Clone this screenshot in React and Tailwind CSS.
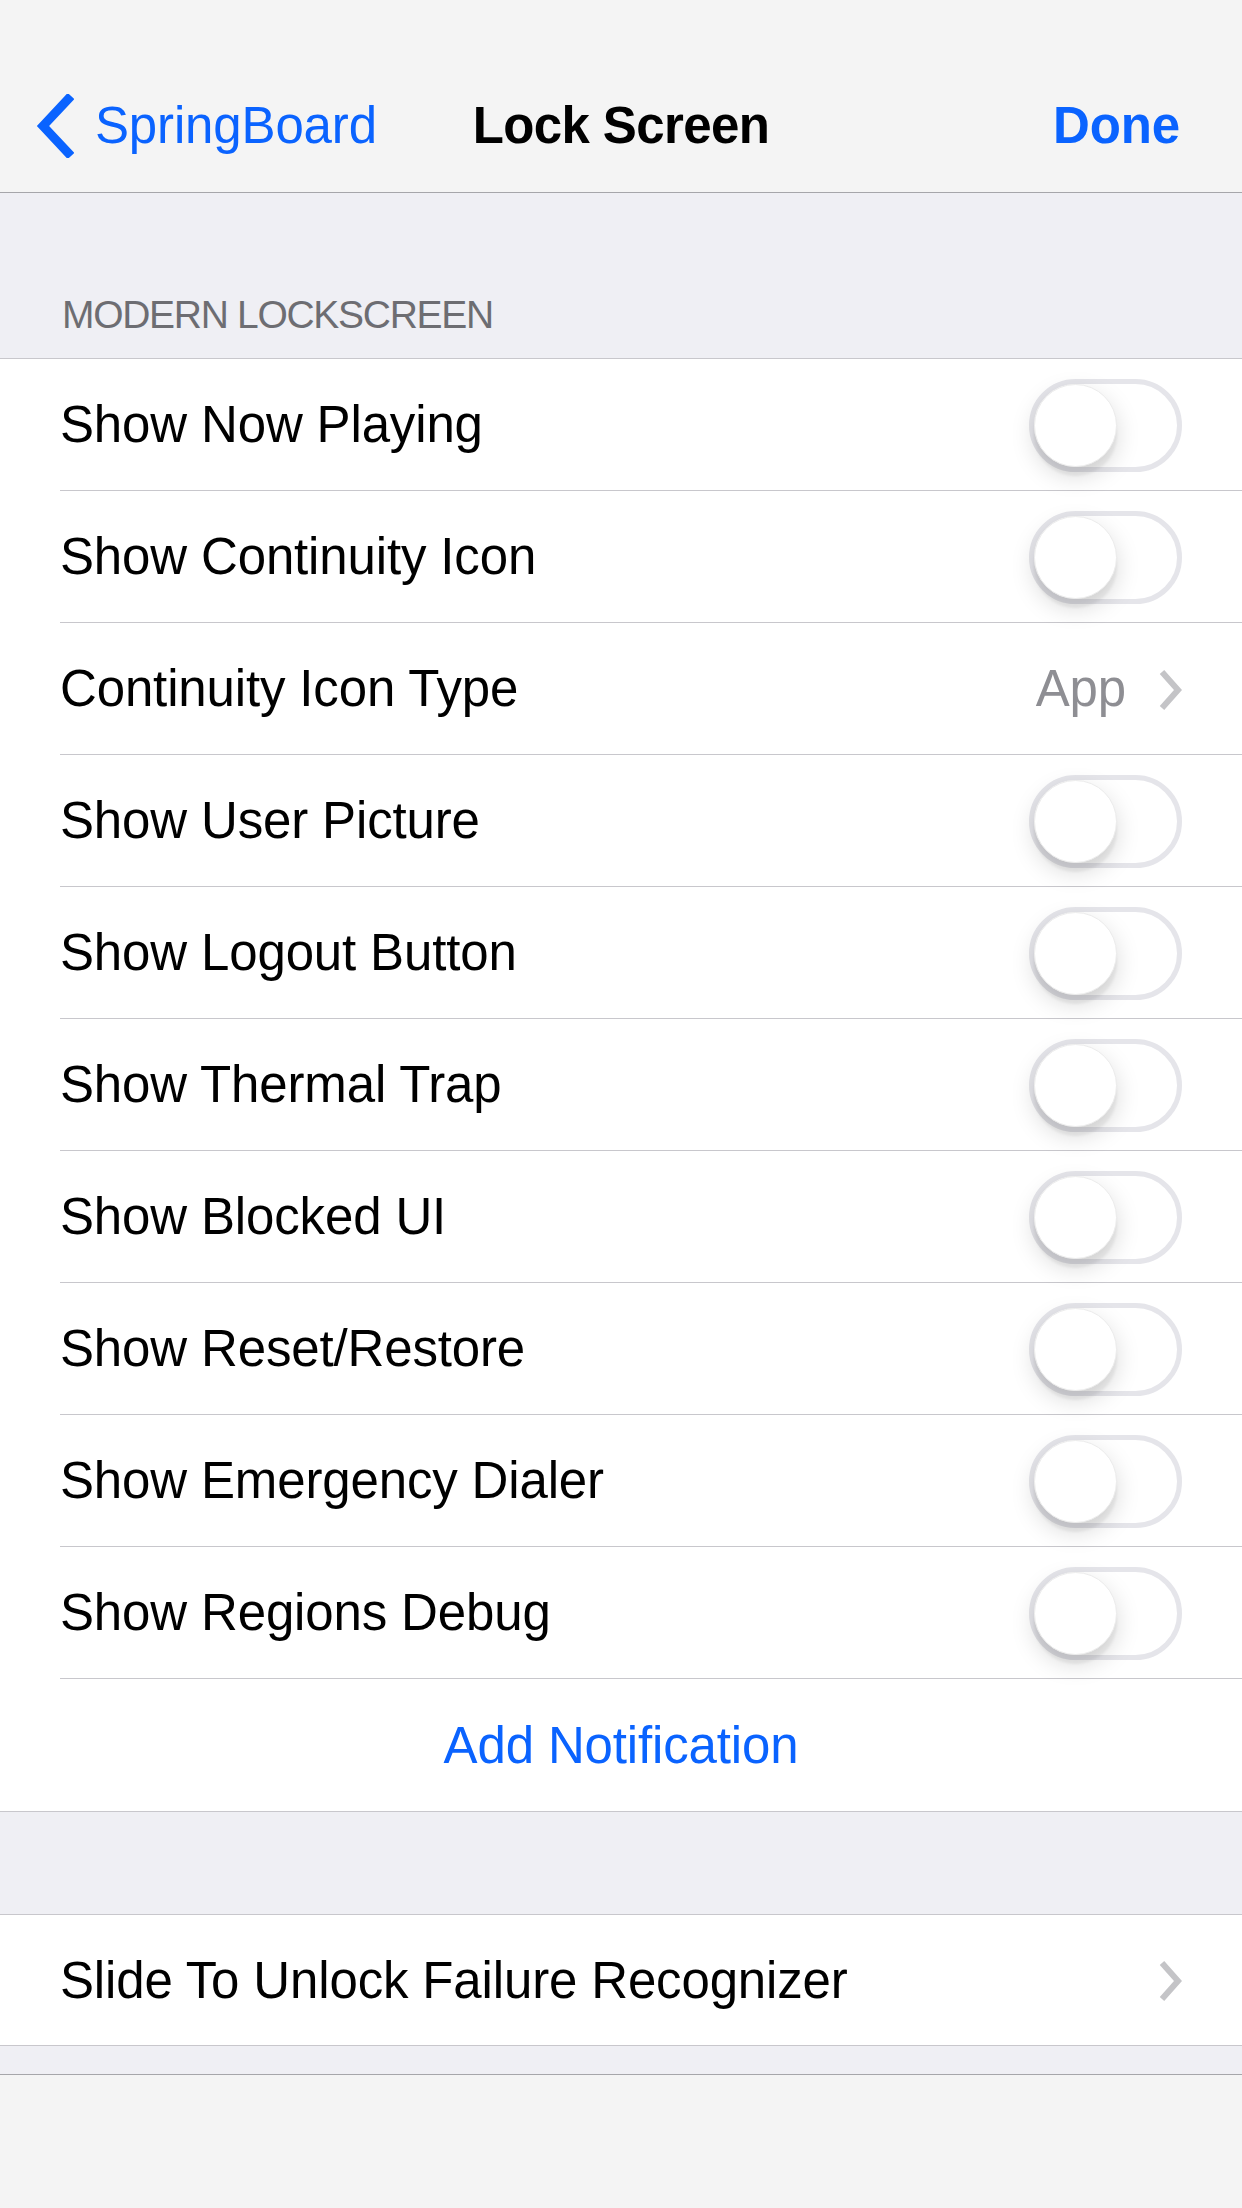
import React from 'react'

const toggles = [
  'Show Now Playing',
  'Show Continuity Icon',
  null,
  'Show User Picture',
  'Show Logout Button',
  'Show Thermal Trap',
  'Show Blocked UI',
  'Show Reset/Restore',
  'Show Emergency Dialer',
  'Show Regions Debug',
]

const Toggle = () => (
  <div className="w-[153px] h-[93px] rounded-full border-[5px] border-[#e5e5ea] bg-white flex items-center">
    <div className="w-[83px] h-[83px] rounded-full bg-white shadow-[0_9px_24px_rgba(0,0,0,0.15),0_9px_3px_rgba(0,0,0,0.06)] border border-[#ececec]" />
  </div>
)

const Chevron = () => (
  <svg width="24" height="42" viewBox="0 0 24 42" fill="none">
    <path d="M4 3 L20 21 L4 39" stroke="#c4c4c7" strokeWidth="6" />
  </svg>
)

const Row = ({ children }) => (
  <div className="h-[132px] pl-[60px] flex bg-white">
    <div className="flex-1 flex items-center pr-[60px] pt-[2px] border-b border-[#c8c7cc]">
      {children}
    </div>
  </div>
)

const App = () => {
  return (
    <div
      className="w-[1242px] h-[2208px] bg-[#efeff4] flex flex-col text-black tracking-[-0.15px]"
      style={{ fontFamily: '"Liberation Sans", Arial, sans-serif' }}
    >
      {/* Nav bar */}
      <div className="h-[193px] pt-[60px] bg-[#f4f4f4] border-b border-[#a6a6aa] grid grid-cols-[1fr_auto_1fr] items-center">
        <div className="flex items-center text-[51px] text-[#0a63ff]">
          <svg width="40" height="64" viewBox="0 0 40 64" fill="none" className="ml-[34px]">
            <path d="M37 2 L9 32 L37 62" stroke="#0a63ff" strokeWidth="9" />
          </svg>
          <span className="ml-[21px]">SpringBoard</span>
        </div>
        <div className="text-[51px] font-semibold tracking-[-0.6px]">Lock Screen</div>
        <div className="flex justify-end pr-[62px] text-[51px] font-semibold text-[#0a63ff]">Done</div>
      </div>

      {/* Section header */}
      <div className="h-[165px] flex items-end pl-[62px] pb-[24px]">
        <span className="text-[39px] leading-none text-[#6d6d72] tracking-[-1.3px]">MODERN LOCKSCREEN</span>
      </div>

      {/* Main section */}
      <div className="border-y border-[#c8c7cc]">
        {toggles.map((label, i) =>
          label ? (
            <Row key={i}>
              <span className="flex-1 text-[51px]">{label}</span>
              <Toggle />
            </Row>
          ) : (
            <Row key={i}>
              <span className="flex-1 text-[51px]">Continuity Icon Type</span>
              <span className="text-[51px] text-[#8e8e93] mr-[32px]">App</span>
              <Chevron />
            </Row>
          )
        )}
        <div className="h-[132px] pt-[2px] bg-white flex items-center justify-center text-[51px] text-[#0a63ff]">
          Add Notification
        </div>
      </div>

      <div className="h-[102px]" />

      <div className="h-[132px] pt-[2px] bg-white border-y border-[#c8c7cc] flex items-center pl-[60px] pr-[60px]">
        <span className="flex-1 text-[51px]">Slide To Unlock Failure Recognizer</span>
        <Chevron />
      </div>

      <div className="h-[28px]" />

      {/* Toolbar */}
      <div className="flex-1 bg-[#f4f4f4] border-t border-[#a6a6aa]" />
    </div>
  )
}

export default App
